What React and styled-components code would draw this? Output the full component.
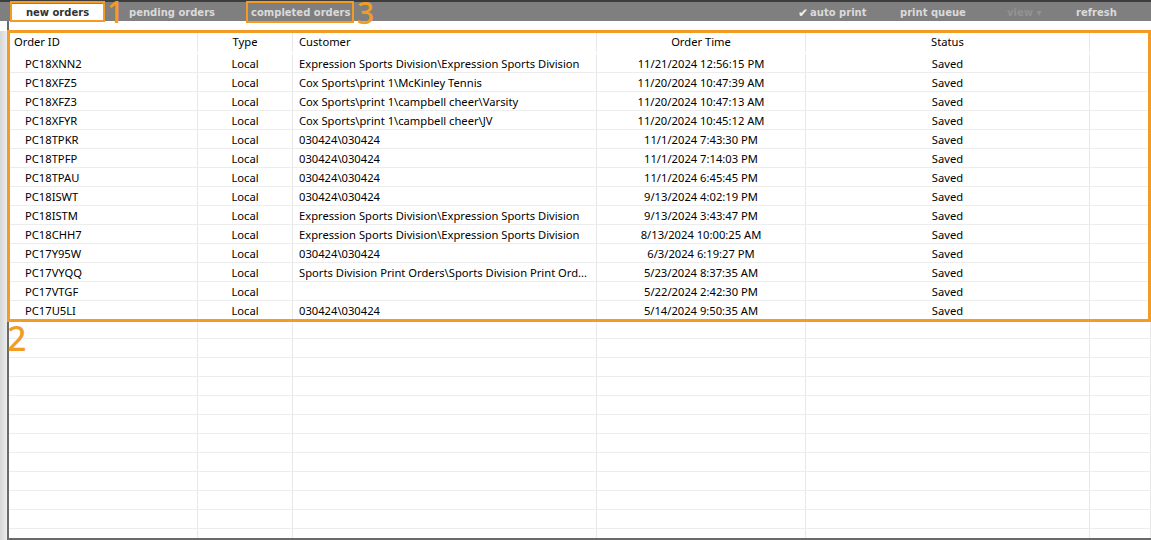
import React from "react";
import styled, { createGlobalStyle } from "styled-components";

const GlobalStyle = createGlobalStyle`
  html, body {
    margin: 0;
    padding: 0;
    background: #ffffff;
    overflow: hidden;
  }
  * {
    box-sizing: border-box;
  }
`;

const ORANGE = "#f29c26";
const COLUMNS = "190px 95px 304px 209px 284px 1fr";

const StyledPage = styled.div`
  position: relative;
  width: 1151px;
  height: 540px;
  display: flex;
  flex-direction: column;
  overflow: hidden;
  font-family: "Noto Sans", "Liberation Sans", sans-serif;
`;

const StyledToolbar = styled.div`
  height: 21px;
  flex: none;
  display: flex;
  align-items: flex-end;
  padding-left: 12px;
  background: #7f7f7f;
  border-top: 2px solid #3d3d3d;
  font-family: "DejaVu Sans", Verdana, sans-serif;
  font-size: 10px;
  font-weight: bold;
`;

const StyledTab = styled.div`
  height: 16px;
  width: ${(p) => p.$width || "auto"};
  display: flex;
  align-items: center;
  justify-content: ${(p) => (p.$active ? "center" : "flex-start")};
  padding-left: ${(p) => p.$indent || "0px"};
  padding-top: 1px;
  margin-bottom: 1px;
  background: ${(p) => (p.$active ? "#ffffff" : "transparent")};
  color: ${(p) => (p.$active ? "#333333" : "#dadada")};
  white-space: nowrap;
`;

const StyledToolGroup = styled.div`
  margin-left: auto;
  display: flex;
  height: 16px;
  padding-top: 1px;
  margin-bottom: 1px;
`;

const StyledToolItem = styled.div`
  width: ${(p) => p.$width};
  display: flex;
  align-items: center;
  gap: 2px;
  color: ${(p) => (p.$disabled ? "#929292" : "#dadada")};
  white-space: nowrap;
`;

const StyledCheck = styled.span`
  font-size: 12px;
  font-weight: bold;
  color: #f0f0f0;
`;

const StyledGridFrame = styled.div`
  flex: 1;
  display: flex;
  min-height: 0;
  padding-top: 10px;
`;

const StyledSideStrip = styled.div`
  width: 7px;
  flex: none;
  background: linear-gradient(to right, #d6d6d6, #ececec);
`;

const StyledGrid = styled.div`
  flex: 1;
  display: flex;
  flex-direction: column;
  overflow: hidden;
  border-left: 2px solid #6a6a6a;
  border-bottom: 2px solid #6a6a6a;
  margin-top: -10px;
  padding-top: 10px;
  background: #ffffff;
`;

const StyledHeaderRow = styled.div`
  display: grid;
  grid-template-columns: ${COLUMNS};
  height: 23px;
  padding-bottom: 2px;
  flex: none;
  margin-left: -1px;
`;

const StyledRow = styled.div`
  display: grid;
  grid-template-columns: ${COLUMNS};
  height: 19px;
  flex: none;
  border-bottom: 1px solid #ededed;
  margin-left: -1px;
`;

const StyledCell = styled.div`
  display: flex;
  align-items: center;
  justify-content: ${(p) => (p.$align === "center" ? "center" : "flex-start")};
  padding-left: ${(p) => p.$pad || "0px"};
  border-right: 1px solid #e8e8e8;
  font-size: 11.2px;
  color: #000000;
  white-space: nowrap;
  overflow: hidden;
`;

const StyledCallout = styled.div`
  position: absolute;
  left: ${(p) => p.$x}px;
  top: ${(p) => p.$y}px;
  width: ${(p) => p.$w}px;
  height: ${(p) => p.$h}px;
  border: ${(p) => p.$border || 2}px solid ${ORANGE};
  pointer-events: none;
`;

const StyledMarker = styled.div`
  position: absolute;
  left: ${(p) => p.$x}px;
  top: ${(p) => p.$y}px;
  font-family: "Noto Sans", "Liberation Sans", sans-serif;
  font-weight: 500;
  font-size: ${(p) => p.$size}px;
  line-height: ${(p) => p.$line}px;
  color: ${ORANGE};
  pointer-events: none;
`;

const orders = [
  ["PC18XNN2", "Expression Sports Division\\Expression Sports Division", "11/21/2024 12:56:15 PM"],
  ["PC18XFZ5", "Cox Sports\\print 1\\McKinley Tennis", "11/20/2024 10:47:39 AM"],
  ["PC18XFZ3", "Cox Sports\\print 1\\campbell cheer\\Varsity", "11/20/2024 10:47:13 AM"],
  ["PC18XFYR", "Cox Sports\\print 1\\campbell cheer\\JV", "11/20/2024 10:45:12 AM"],
  ["PC18TPKR", "030424\\030424", "11/1/2024 7:43:30 PM"],
  ["PC18TPFP", "030424\\030424", "11/1/2024 7:14:03 PM"],
  ["PC18TPAU", "030424\\030424", "11/1/2024 6:45:45 PM"],
  ["PC18ISWT", "030424\\030424", "9/13/2024 4:02:19 PM"],
  ["PC18ISTM", "Expression Sports Division\\Expression Sports Division", "9/13/2024 3:43:47 PM"],
  ["PC18CHH7", "Expression Sports Division\\Expression Sports Division", "8/13/2024 10:00:25 AM"],
  ["PC17Y95W", "030424\\030424", "6/3/2024 6:19:27 PM"],
  ["PC17VYQQ", "Sports Division Print Orders\\Sports Division Print Ord...", "5/23/2024 8:37:35 AM"],
  ["PC17VTGF", "", "5/22/2024 2:42:30 PM"],
  ["PC17U5LI", "030424\\030424", "5/14/2024 9:50:35 AM"],
];

const EMPTY_ROWS = 14;

const OrderRow = ({ order }) => {
  if (!order) {
    return (
      <StyledRow>
        {Array.from({ length: 6 }).map((_, i) => (
          <StyledCell key={i} />
        ))}
      </StyledRow>
    );
  }
  const [id, customer, time] = order;
  return (
    <StyledRow>
      <StyledCell $pad="17px">{id}</StyledCell>
      <StyledCell $align="center">Local</StyledCell>
      <StyledCell $pad="6px">{customer}</StyledCell>
      <StyledCell $align="center">{time}</StyledCell>
      <StyledCell $align="center">Saved</StyledCell>
      <StyledCell />
    </StyledRow>
  );
};

const App = () => {
  return (
    <StyledPage>
      <GlobalStyle />
      <StyledToolbar>
        <StyledTab $active $width="91px">new orders</StyledTab>
        <StyledTab $width="148px" $indent="26px">pending orders</StyledTab>
        <StyledTab>completed orders</StyledTab>
        <StyledToolGroup>
          <StyledToolItem $width="102px">
            <StyledCheck>✔</StyledCheck>auto print
          </StyledToolItem>
          <StyledToolItem $width="107px">print queue</StyledToolItem>
          <StyledToolItem $width="69px" $disabled>
            view ▾
          </StyledToolItem>
          <StyledToolItem $width="75px">refresh</StyledToolItem>
        </StyledToolGroup>
      </StyledToolbar>

      <StyledGridFrame>
        <StyledSideStrip />
        <StyledGrid>
          <StyledHeaderRow>
            <StyledCell $pad="6px">Order ID</StyledCell>
            <StyledCell $align="center">Type</StyledCell>
            <StyledCell $pad="6px">Customer</StyledCell>
            <StyledCell $align="center">Order Time</StyledCell>
            <StyledCell $align="center">Status</StyledCell>
            <StyledCell />
          </StyledHeaderRow>
          {orders.map((o) => (
            <OrderRow key={o[0]} order={o} />
          ))}
          {Array.from({ length: EMPTY_ROWS }).map((_, i) => (
            <OrderRow key={`empty-${i}`} />
          ))}
        </StyledGrid>
      </StyledGridFrame>

      <StyledCallout $x={10} $y={1} $w={95} $h={21} />
      <StyledMarker $x={107} $y={0} $size={30} $line={24}>1</StyledMarker>
      <StyledCallout $x={246} $y={1} $w={108} $h={22} />
      <StyledMarker $x={357} $y={1} $size={30} $line={24}>3</StyledMarker>
      <StyledCallout $x={7} $y={30} $w={1144} $h={292} $border={3} />
      <StyledMarker $x={7} $y={325} $size={34} $line={27}>2</StyledMarker>
    </StyledPage>
  );
};

export default App;
